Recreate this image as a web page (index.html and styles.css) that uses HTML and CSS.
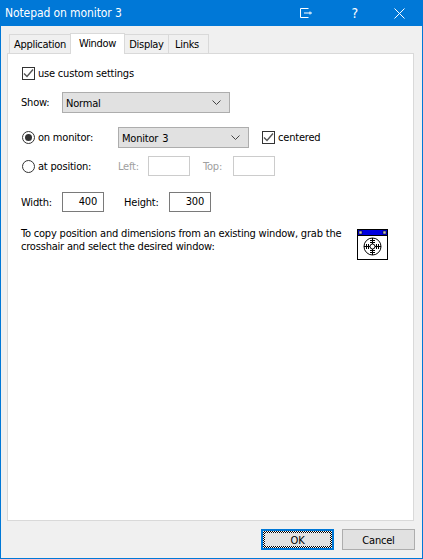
FILE: index.html
```html
<!DOCTYPE html>
<html lang="en">
<head>
    <meta charset="UTF-8">
    <meta name="viewport" content="width=device-width, initial-scale=1.0">
    <title>Notepad on monitor 3</title>
    <link rel="stylesheet" href="styles.css">
</head>
<body>
    <div class="window">
        <div class="titlebar">
            <span class="title">Notepad on monitor 3</span>
            <svg class="tb-icon tb-pin" width="12" height="10" viewBox="0 0 12 10">
                <path d="M8.5 .5H.5V9.5H8.5M4 5H12M10 3.5V6.5" fill="none" stroke="#fff"/>
            </svg>
            <span class="tb-help">?</span>
            <svg class="tb-icon tb-close" width="11" height="11" viewBox="0 0 11 11">
                <path d="M.5 .5L10.5 10.5M10.5 .5L.5 10.5" fill="none" stroke="#fff"/>
            </svg>
        </div>

        <div class="tabs">
            <div class="tab tab-application">Application</div>
            <div class="tab tab-active">Window</div>
            <div class="tab tab-display">Display</div>
            <div class="tab tab-links">Links</div>
        </div>

        <div class="panel">
            <div class="row row-custom">
                <span class="check">
                    <svg width="11" height="11" viewBox="0 0 11 11"><path d="M1 5.5L4 8.5L10 1.5" fill="none" stroke="#555" stroke-width="1.4"/></svg>
                </span>
                <span class="check-label">use custom settings</span>
            </div>

            <div class="row row-show">
                <span class="label label-show">Show:</span>
                <div class="select select-show">
                    <span class="select-value">Normal</span>
                    <svg class="chevron" width="9" height="5" viewBox="0 0 9 5"><path d="M.5 .5L4.5 4.5L8.5 .5" fill="none" stroke="#444"/></svg>
                </div>
            </div>

            <div class="row row-monitor">
                <span class="radio radio-on"></span>
                <span class="check-label label-radio">on monitor:</span>
                <div class="select select-monitor">
                    <span class="select-value">Monitor 3</span>
                    <svg class="chevron" width="9" height="5" viewBox="0 0 9 5"><path d="M.5 .5L4.5 4.5L8.5 .5" fill="none" stroke="#444"/></svg>
                </div>
                <span class="check check-centered">
                    <svg width="11" height="11" viewBox="0 0 11 11"><path d="M1 5.5L4 8.5L10 1.5" fill="none" stroke="#555" stroke-width="1.4"/></svg>
                </span>
                <span class="check-label">centered</span>
            </div>

            <div class="row row-position">
                <span class="radio"></span>
                <span class="check-label label-radio">at position:</span>
                <span class="label-off label-left">Left:</span>
                <div class="input input-off"></div>
                <span class="label-off label-top">Top:</span>
                <div class="input input-off"></div>
            </div>

            <div class="row row-size">
                <span class="label label-width">Width:</span>
                <div class="input">400</div>
                <span class="label label-height">Height:</span>
                <div class="input">300</div>
            </div>

            <div class="row row-copy">
                <p class="copy-text">To copy position and dimensions from an existing window, grab the crosshair and select the desired window:</p>
                <svg class="finder" width="31" height="31" viewBox="0 0 31 31">
                    <rect x=".5" y=".5" width="30" height="30" fill="#fff" stroke="#000"/>
                    <rect x="1" y="1" width="29" height="5" fill="#0000e0"/>
                    <path d="M1 6.5H30" stroke="#000"/>
                    <rect x="2" y="2" width="3" height="3" fill="#c0c0c0" stroke="#000" stroke-width=".5"/>
                    <rect x="26" y="2" width="3" height="3" fill="#c0c0c0" stroke="#000" stroke-width=".5"/>
                    <circle cx="15.5" cy="17.5" r="8.5" fill="none" stroke="#000"/>
                    <circle cx="15.5" cy="17.5" r="2.5" fill="none" stroke="#000"/>
                    <path d="M15.5 9V15M15.5 20V26M7 17.5H13M18 17.5H24" stroke="#000"/>
                    <path d="M13 11.5H18M13 13.5H18M13 21.5H18M13 23.5H18M9.5 15V20M11.5 15V20M19.5 15V20M21.5 15V20" stroke="#000"/>
                </svg>
            </div>
        </div>

        <div class="footer">
            <button class="btn btn-ok"><span class="btn-focus"><span class="btn-inner">OK</span></span></button>
            <button class="btn btn-cancel"><span class="btn-label">Cancel</span></button>
        </div>
    </div>
</body>
</html>
```

FILE: styles.css
```css
html, body {
    margin: 0;
    padding: 0;
}
body {
    width: 423px;
    height: 559px;
    overflow: hidden;
    font-family: "DejaVu Sans", sans-serif;
    font-stretch: condensed;
    font-size: 11px;
    letter-spacing: -0.2px;
    color: #000;
}
.window {
    box-sizing: border-box;
    width: 423px;
    height: 559px;
    display: flex;
    flex-direction: column;
    background-color: #f0f0f0;
    border: 1px solid #0078d7;
    border-top: none;
}
.titlebar {
    height: 26px;
    margin: 0 -1px;
    background-color: #0078d7;
    color: #fff;
    display: flex;
    align-items: center;
    flex-shrink: 0;
}
.title {
    font-size: 12px;
    letter-spacing: -0.1px;
    margin-left: 5px;
    flex: 1;
}
.tb-pin {
    margin-right: 40px;
}
.tb-help {
    font-size: 14px;
    margin-right: 36px;
}
.tb-close {
    margin-right: 18px;
}
.tabs {
    display: flex;
    align-items: flex-end;
    height: 27px;
    padding-left: 9px;
    flex-shrink: 0;
}
.tab {
    box-sizing: border-box;
    height: 19px;
    line-height: 19px;
    text-align: center;
    border: 1px solid #d9d9d9;
    border-bottom: none;
    margin-left: -1px;
    letter-spacing: -0.3px;
}
.tab-application {
    width: 62px;
}
.tab-active {
    width: 55px;
    height: 21px;
    line-height: 19px;
    background-color: #fff;
    margin-bottom: -1px;
    position: relative;
    z-index: 1;
}
.tab-display {
    width: 45px;
}
.tab-links {
    width: 41px;
    padding-right: 3px;
}
.panel {
    box-sizing: border-box;
    margin-left: 6px;
    width: 407px;
    height: 468px;
    background-color: #fff;
    border: 1px solid #d9d9d9;
    padding: 13px 0 0 13px;
    flex-shrink: 0;
}
.row {
    display: flex;
    align-items: center;
}
.check {
    box-sizing: border-box;
    width: 13px;
    height: 13px;
    margin-left: 1px;
    border: 1px solid #333;
    background-color: #fff;
    display: flex;
    align-items: center;
    justify-content: center;
}
.check-label {
    margin-left: 3px;
}
.row-show {
    margin-top: 12px;
    height: 21px;
}
.label-show {
    width: 41px;
}
.select {
    box-sizing: border-box;
    height: 21px;
    background-color: #e1e1e1;
    border: 1px solid #adadad;
    display: flex;
    align-items: center;
    justify-content: space-between;
    padding: 0 8px 0 3px;
}
.select-value {
    padding-top: 2px;
    word-spacing: 1px;
}
.select-show {
    width: 168px;
}
.row-monitor {
    margin-top: 14px;
    height: 21px;
}
.radio {
    box-sizing: border-box;
    width: 13px;
    height: 13px;
    margin-left: 1px;
    border: 1px solid #333;
    border-radius: 50%;
    background-color: #fff;
    display: flex;
    align-items: center;
    justify-content: center;
}
.radio-on::after {
    content: "";
    width: 7px;
    height: 7px;
    border-radius: 50%;
    background-color: #333;
}
.label-radio {
    width: 80px;
}
.select-monitor {
    width: 131px;
}
.check-centered {
    margin-left: 13px;
}
.row-position {
    margin-top: 8px;
    height: 20px;
}
.label-off {
    color: #a0a0a0;
}
.label-left {
    width: 30px;
}
.label-top {
    width: 30px;
    margin-left: 13px;
}
.input {
    box-sizing: border-box;
    width: 42px;
    height: 20px;
    border: 1px solid #7a7a7a;
    background-color: #fff;
    line-height: 18px;
    text-align: right;
    padding-right: 6px;
}
.input-off {
    border-color: #ccc;
}
.row-size {
    margin-top: 16px;
    height: 20px;
}
.label-width {
    width: 41px;
}
.label-height {
    width: 45px;
    margin-left: 20px;
}
.row-copy {
    margin-top: 15px;
    align-items: flex-start;
}
.copy-text {
    margin: 0;
    width: 330px;
    line-height: 13px;
}
.finder {
    margin: 2px 0 0 6px;
}
.footer {
    display: flex;
    justify-content: flex-end;
    padding: 8px 7px 0 0;
    gap: 8px;
}
.btn {
    box-sizing: border-box;
    height: 21px;
    padding: 0;
    font-family: inherit;
    font-stretch: inherit;
    font-size: 11px;
    letter-spacing: inherit;
    color: #000;
    background-color: #e1e1e1;
    border: 1px solid #adadad;
}
.btn-ok {
    width: 73px;
    border: 2px solid #0078d7;
}
.btn-focus {
    display: block;
    height: 17px;
    box-sizing: border-box;
    padding: 2px;
    background: repeating-conic-gradient(#000 0 25%, #fff 0 50%) 0 0 / 2px 2px;
}
.btn-inner {
    display: block;
    height: 13px;
    line-height: 15px;
    background-color: #e1e1e1;
}
.btn-label {
    display: block;
    padding-top: 1px;
}
.btn-cancel {
    width: 73px;
}
```
